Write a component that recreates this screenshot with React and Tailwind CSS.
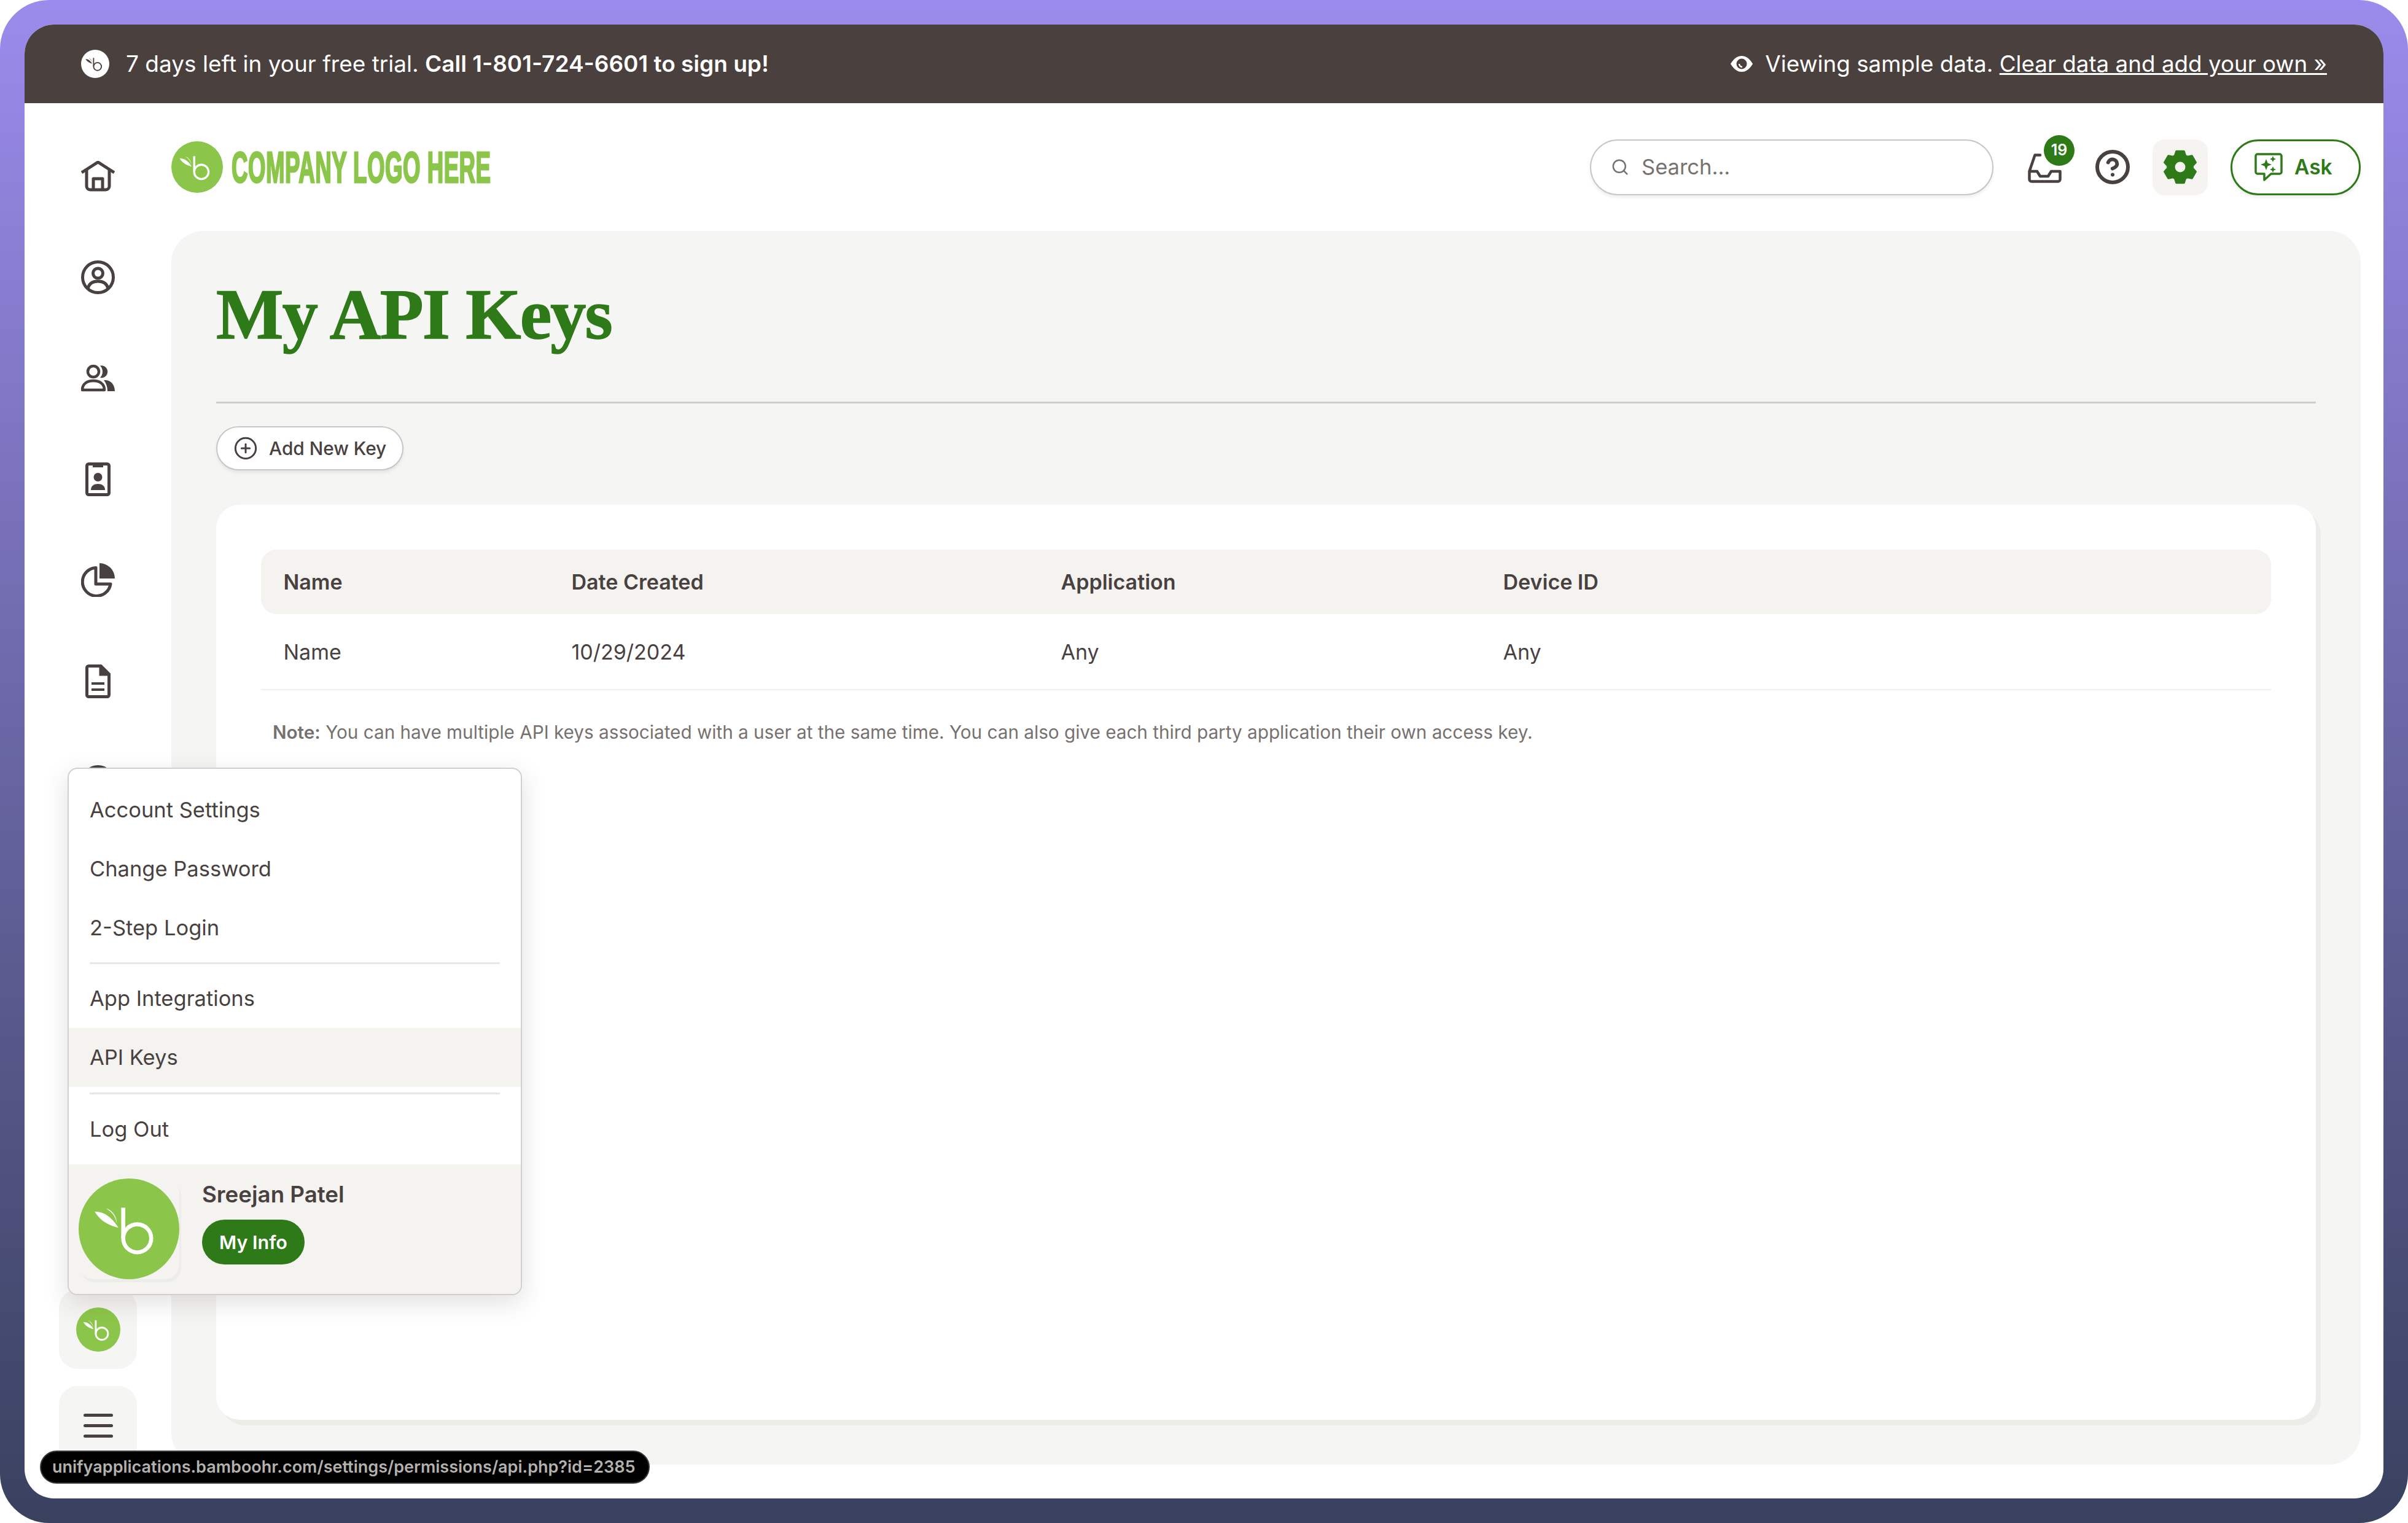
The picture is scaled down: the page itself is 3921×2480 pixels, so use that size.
import { CirclePlus, Search, CircleHelp } from "lucide-react";

// bamboo "b" mark, circle and stroke colours come in as classes
function BambooMark({ className, circle = "fill-[#8bc64a]", mark = "white" }) {
  return (
    <svg viewBox="0 0 100 100" className={className}>
      <circle cx="50" cy="50" r="50" className={circle} />
      <path d="M44.300 29V59.400" fill="none" stroke={mark} strokeWidth="4" />
      <circle cx="58.200" cy="59.400" r="13.900" fill="none" stroke={mark} strokeWidth="4" />
      <path d="M16 33C24 33 32 37 39.500 49 31 47 22 43 16 33Z" fill={mark} />
      <path d="M27 29.500C33 31 38 37 38 45 37 38 33 33 27 29.500Z" fill={mark} />
    </svg>
  );
}

function EyeIcon() {
  return (
    <svg viewBox="0 0 36 26" className="w-[36px] h-[26px]">
      <path d="M0 13C6 3 12 0 18 0S30 3 36 13C30 23 24 26 18 26S6 23 0 13Z" fill="white" />
      <circle cx="18" cy="13" r="8.500" fill="#4a403e" />
      <path d="M14 13a5 5 0 0 0 5 5" fill="none" stroke="white" strokeWidth="2.500" />
    </svg>
  );
}

function HomeIcon() {
  return (
    <svg viewBox="0 0 55 50" className="w-[55px] h-[50px]" fill="none" stroke="#48413f" strokeWidth="5" strokeLinejoin="round">
      <path d="M1 19 27.500 2 54 19" />
      <path d="M9 15V41a6 6 0 0 0 6 6H40a6 6 0 0 0 6-6V15" />
      <path d="M20 47V29H35V47" />
    </svg>
  );
}

function UserCircleIcon() {
  return (
    <svg viewBox="0 0 55 55" className="w-[55px] h-[55px]" fill="none" stroke="#48413f" strokeWidth="5">
      <circle cx="27.500" cy="27.500" r="25" />
      <circle cx="27.500" cy="21" r="8" />
      <path d="M11 46C13 37 20 34 27.500 34S42 37 44 46" />
    </svg>
  );
}

function PeopleIcon() {
  return (
    <svg viewBox="0 0 55 44" className="w-[55px] h-[44px]" fill="none" stroke="#48413f" strokeWidth="4.500">
      <ellipse cx="20" cy="11" rx="9" ry="9" />
      <path d="M2 41C2 31 10 26 20 26S38 31 38 41Z" strokeLinejoin="round" />
      <path d="M31 1.500A10 10 0 1 1 31 21 14 14 0 0 0 31 1.500Z" fill="#48413f" stroke="none" />
      <path d="M37 25C47 24 55 31 55 43H43C43 36 41 30 37 25Z" fill="#48413f" stroke="none" />
    </svg>
  );
}

function BadgeIcon() {
  return (
    <svg viewBox="0 0 41 55" className="w-[41px] h-[55px]" fill="none" stroke="#48413f" strokeWidth="5">
      <rect x="2.500" y="2.500" width="36" height="50" rx="3" />
      <path d="M12 3H29V8H12Z" fill="#48413f" stroke="none" />
      <circle cx="20.500" cy="24" r="7" fill="#48413f" stroke="none" />
      <path d="M9 45C9 38 14 35 20.500 35S32 38 32 45Z" fill="#48413f" stroke="none" />
    </svg>
  );
}

function PieIcon() {
  return (
    <svg viewBox="0 0 55 55" className="w-[55px] h-[55px]" fill="none" stroke="#48413f" strokeWidth="5">
      <path d="M24 7.500A23 23 0 1 0 48 34H24Z" strokeLinejoin="round" />
      <path d="M30 0A25 25 0 0 1 55 25H30Z" fill="#48413f" stroke="none" />
    </svg>
  );
}

function DocIcon() {
  return (
    <svg viewBox="0 0 41 55" className="w-[41px] h-[55px]" fill="none" stroke="#48413f" strokeWidth="5">
      <path d="M5.500 2.500H25L38.500 16V49.500a3 3 0 0 1-3 3H5.500a3 3 0 0 1-3-3V5.500a3 3 0 0 1 3-3Z" strokeLinejoin="round" />
      <path d="M25 2.500 38.500 16H25Z" fill="#48413f" />
      <path d="M10 31H31M10 41H31" strokeWidth="4" />
    </svg>
  );
}

function InboxIcon() {
  return (
    <svg viewBox="0 0 55 48" className="w-[55px] h-[48px]" fill="none" stroke="#48413f" strokeWidth="4.500" strokeLinejoin="round" strokeLinecap="round">
      <path d="M20 2.500H11.500L2.500 29V42A3.500 3.500 0 0 0 6 45.500H49A3.500 3.500 0 0 0 52.500 42V29H38L33 37H20L15 29H2.500" />
    </svg>
  );
}

// six chunky teeth round a hole
const gearPoints = [-90, -30, 30, 90, 150, 210]
  .flatMap((a) => [
    [a - 24, 20],
    [a - 13, 26],
    [a + 13, 26],
    [a + 24, 20],
  ])
  .map(([a, r]) => `${28 + r * Math.cos((a * Math.PI) / 180)},${28 + r * Math.sin((a * Math.PI) / 180)}`)
  .join(" ");

function GearIcon() {
  return (
    <svg viewBox="0 0 56 56" className="w-[56px] h-[56px]">
      <polygon points={gearPoints} fill="#2e7918" stroke="#2e7918" strokeWidth="4" strokeLinejoin="round" />
      <circle cx="28" cy="28" r="8.500" fill="#f5f4f1" />
    </svg>
  );
}

function AskIcon() {
  return (
    <svg viewBox="0 0 46 46" className="w-[46px] h-[46px]" fill="none" stroke="#2e7918" strokeWidth="3.500">
      <path d="M5 2H41a3 3 0 0 1 3 3V31a3 3 0 0 1-3 3H27L16 44V34H5a3 3 0 0 1-3-3V5a3 3 0 0 1 3-3Z" strokeLinejoin="round" />
      <path d="M19 10 21.500 16.500 28 19 21.500 21.500 19 28 16.500 21.500 10 19 16.500 16.500Z" fill="#2e7918" stroke="none" />
      <path d="M30 5 31.500 8.500 35 10 31.500 11.500 30 15 28.500 11.500 25 10 28.500 8.500Z" fill="#2e7918" stroke="none" />
      <path d="M30 22 31.500 25.500 35 27 31.500 28.500 30 32 28.500 28.500 25 27 28.500 25.500Z" fill="#2e7918" stroke="none" />
    </svg>
  );
}

const navIcons = [HomeIcon, UserCircleIcon, PeopleIcon, BadgeIcon, PieIcon, DocIcon, UserCircleIcon];

function MenuItem({ label, active }) {
  return (
    <div className={`h-[96px] flex items-center pl-[34px] text-[34.5px] ${active ? "bg-[#f4f3f0]" : ""}`}>
      {label}
    </div>
  );
}

function AccountMenu() {
  return (
    <div className="absolute left-[70px] top-[1210px] w-[740px] h-[859px] flex flex-col bg-white rounded-[16px] border-2 border-[#d2d0cc] overflow-hidden shadow-[0_12px_40px_rgba(72,65,63,0.16)] text-[#48413f]">
      <div className="pt-[19px]">
        <MenuItem label="Account Settings" />
        <MenuItem label="Change Password" />
        <MenuItem label="2-Step Login" />
      </div>
      <div className="mx-[34px] mt-[8px] mb-[8px] h-[3px] bg-[#e8e7e3]" />
      <MenuItem label="App Integrations" />
      <MenuItem label="API Keys" active />
      <div className="mx-[34px] mt-[9px] mb-[9px] h-[3px] bg-[#e8e7e3]" />
      <MenuItem label="Log Out" />
      <div className="mt-auto h-[211px] flex bg-[#f4f3f0] pl-[16px] pt-[23px] gap-[37px]">
        <div className="w-[164px] h-[164px] shrink-0 rounded-[24px] shadow-[3px_5px_0_#ecede9]">
          <BambooMark className="w-[164px] h-[164px]" />
        </div>
        <div className="flex flex-col items-start">
          <div className="h-[51px] flex items-center text-[36.7px] font-semibold">Sreejan Patel</div>
          <button className="mt-[16px] h-[73px] w-[167px] rounded-full bg-[#2e7918] text-white text-[30.5px] font-semibold">
            My Info
          </button>
        </div>
      </div>
    </div>
  );
}

export default function App() {
  return (
    <div className="w-[3921px] h-[2480px] bg-white font-['Inter',sans-serif]">
      <div className="w-full h-full p-[40px] rounded-[80px] bg-linear-to-b from-[#9b8bec] to-[#39415f]">
        <div className="relative w-full h-full flex flex-col bg-white rounded-[48px] overflow-hidden">
          {/* trial banner */}
          <div className="h-[128px] shrink-0 flex items-center justify-between bg-[#4a403e] text-white text-[36.8px] pl-[92px] pr-[92px]">
            <div className="flex items-center gap-[27px] text-[37px]">
              <BambooMark className="w-[46px] h-[46px]" circle="fill-white" mark="#4a403e" />
              <span>
                7 days left in your free trial. <span className="font-semibold">Call 1-801-724-6601 to sign up!</span>
              </span>
            </div>
            <div className="flex items-center gap-[20px]">
              <EyeIcon />
              <span>
                Viewing sample data. <span className="underline">Clear data and add your own »</span>
              </span>
            </div>
          </div>

          <div className="flex-1 flex min-h-0">
            {/* left nav */}
            <div className="w-[239px] shrink-0 flex flex-col items-center pt-[91px] pb-[55px]">
              <div className="flex flex-col items-center gap-[109.5px]">
                {navIcons.map((Icon, i) => (
                  <div key={i} className="h-[55px] flex items-center justify-center">
                    <Icon />
                  </div>
                ))}
              </div>
              <div className="mt-auto flex flex-col gap-[28px]">
                <div className="w-[127px] h-[129px] rounded-[30px] bg-[#f5f5f3] flex items-center justify-center">
                  <BambooMark className="w-[72px] h-[72px]" />
                </div>
                <div className="w-[127px] h-[128px] rounded-[30px] bg-[#f5f5f3] flex flex-col items-center justify-center gap-[12px]">
                  <div className="w-[48px] h-[5px] rounded-full bg-[#48413f]" />
                  <div className="w-[48px] h-[5px] rounded-full bg-[#48413f]" />
                  <div className="w-[48px] h-[5px] rounded-full bg-[#48413f]" />
                </div>
              </div>
            </div>

            <div className="flex-1 min-w-0 flex flex-col pr-[37px] pb-[55px]">
              {/* top bar */}
              <div className="h-[208px] shrink-0 flex items-center">
                <BambooMark className="w-[84px] h-[84px] shrink-0" />
                <div className="ml-[14px] w-[426px] h-[84px] pt-[2px] flex items-center text-[#8bc64a] text-[70px] leading-none font-bold tracking-[1px] [-webkit-text-stroke:3px_#8bc64a] font-['Liberation_Sans',sans-serif] origin-left scale-x-[0.523] whitespace-nowrap">
                  COMPANY LOGO HERE
                </div>
                <div className="ml-auto flex items-center">
                  <div className="w-[657px] h-[91px] rounded-full bg-white border-2 border-[#c9c7c3] shadow-[0_4px_4px_rgba(72,65,63,0.08)] flex items-center pl-[32px] gap-[20px] text-[34.5px] text-[#777270]">
                    <Search className="w-[30px] h-[30px]" strokeWidth={2} />
                    <span>Search...</span>
                  </div>
                  <div className="relative ml-[56px] w-[55px] h-[48px] mt-[3px]">
                    <InboxIcon />
                    <div className="absolute left-[26px] top-[-30px] w-[50px] h-[50px] rounded-full bg-[#2e7918] text-white text-[25px] font-semibold flex items-center justify-center">
                      19
                    </div>
                  </div>
                  <CircleHelp className="ml-[53px] w-[60px] h-[60px] text-[#48413f]" strokeWidth={2.400} />
                  <div className="ml-[35px] w-[90px] h-[91px] rounded-[20px] bg-[#f5f4f1] flex items-center justify-center">
                    <GearIcon />
                  </div>
                  <div className="ml-[37px] w-[212px] h-[91px] rounded-full border-[3px] border-[#2e7918] flex items-center pl-[36px] gap-[19px] text-[#2e7918] text-[33.5px] font-semibold shadow-[0_4px_4px_rgba(72,65,63,0.08)]">
                    <AskIcon />
                    <span>Ask</span>
                  </div>
                </div>
              </div>

              {/* page panel */}
              <div className="flex-1 min-h-0 flex flex-col bg-[#f5f5f3] rounded-[52px] px-[73px] pb-[73px] text-[#48413f]">
                <h1 className="h-[281px] shrink-0 pt-[78px] border-b-[3px] border-[#cfcecb] text-[116px] leading-none font-bold tracking-[-1.8px] [-webkit-text-stroke:1.5px_#2e7918] text-[#2e7918] font-['Liberation_Serif',serif]">
                  My API Keys
                </h1>
                <button className="mt-[37px] self-start w-[305px] h-[72px] shrink-0 rounded-full bg-white border-2 border-[#c9c7c3] shadow-[0_4px_4px_rgba(72,65,63,0.08)] flex items-center pl-[26px] gap-[18px] text-[29.8px] font-medium">
                  <CirclePlus className="w-[40px] h-[40px]" strokeWidth={1.800} />
                  <span>Add New Key</span>
                </button>
                <div className="mt-[56px] flex-1 min-h-0 bg-white rounded-[38px] p-[73px] shadow-[8px_9px_0_#ecede9]">
                  <div className="h-[105px] grid grid-cols-[469px_797px_720px_1fr] items-center pl-[36.5px] bg-[#f4f3f0] rounded-[25px] text-[34px] font-semibold">
                    <div>Name</div>
                    <div>Date Created</div>
                    <div>Application</div>
                    <div>Device ID</div>
                  </div>
                  <div className="h-[124px] grid grid-cols-[469px_797px_720px_1fr] items-center pl-[36.5px] border-b-2 border-[#f1f0ed] text-[34px]">
                    <div>Name</div>
                    <div>10/29/2024</div>
                    <div>Any</div>
                    <div>Any</div>
                  </div>
                  <p className="mt-[48px] pl-[19px] h-[40px] leading-[40px] text-[29.7px] text-[#76716f]">
                    <span className="font-semibold">Note:</span> You can have multiple API keys associated with a user at the same time. You can also give each third party application their own access key.
                  </p>
                </div>
              </div>
            </div>
          </div>

          <AccountMenu />

          {/* link preview */}
          <div className="absolute left-[25px] top-[2322px] w-[993px] h-[54px] rounded-full bg-black border-2 border-[#3c3c3c] flex items-center pl-[18px] text-[#b4b2ae] text-[27px] font-semibold whitespace-nowrap">
            unifyapplications.bamboohr.com/settings/permissions/api.php?id=2385
          </div>
        </div>
      </div>
    </div>
  );
}
